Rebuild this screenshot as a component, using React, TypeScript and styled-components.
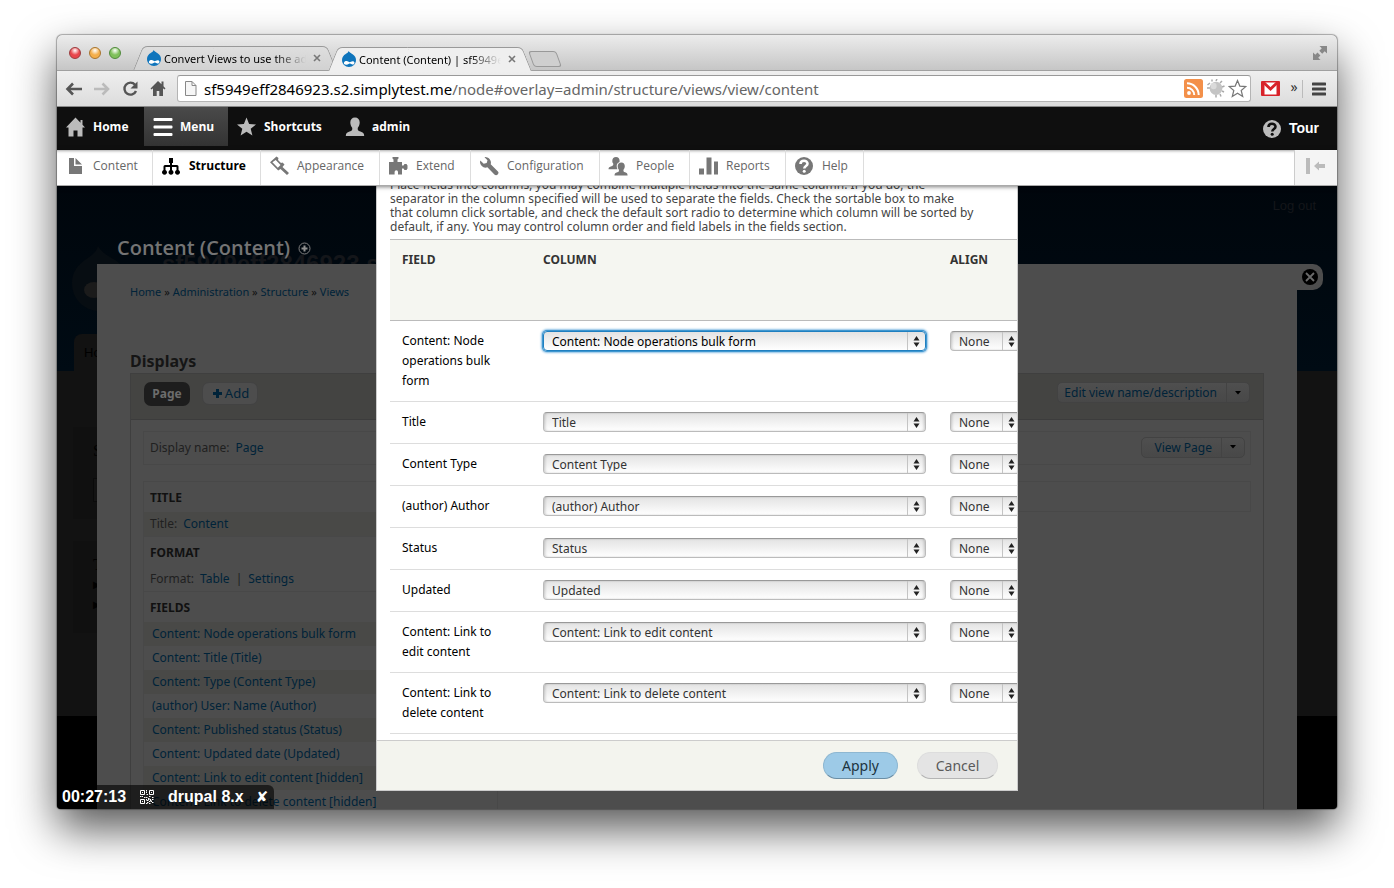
import React from "react";
import styled, { createGlobalStyle, css } from "styled-components";

const ui = `"Noto Sans", "Open Sans", sans-serif`;
const bar = `"Open Sans", "Noto Sans", sans-serif`;
const arial = `"Liberation Sans", Arial, sans-serif`;

const GlobalStyle = createGlobalStyle`
  *, *::before, *::after { box-sizing: border-box; }
  body { margin: 0; background: #fff; font-family: ${ui}; font-size: 12px; }
  button, select, input { font: inherit; color: inherit; margin: 0; }
  a { text-decoration: none; color: inherit; }
  h1, h2, h3, p, ul { margin: 0; padding: 0; font-size: inherit; }
  ul { list-style: none; }
`;

/* ---------- browser window ---------- */

const Desktop = styled.div`
  height: 100vh;
  padding: 35px 57px 79px;
  overflow: hidden;
`;

const BrowserWindow = styled.div`
  height: 100%;
  display: flex;
  flex-direction: column;
  border-radius: 5px 5px 4px 4px;
  overflow: hidden;
  background: #4d4d4d;
  box-shadow: 0 0 1px 1px rgba(0, 0, 0, 0.3), 0 20px 44px rgba(0, 0, 0, 0.66);
`;

const TitleBar = styled.div`
  flex: none;
  height: 36px;
  display: flex;
  align-items: flex-end;
  padding: 0 10px 0 12px;
  background: linear-gradient(#ececec, #c6c6c6);
  border-bottom: 1px solid #a0a0a0;
`;

const Lights = styled.div`
  display: flex;
  gap: 8px;
  align-self: center;
  width: 70px;
`;

const Light = styled.button<{ $tone: string; $rim: string }>`
  width: 12px;
  height: 12px;
  padding: 0;
  border-radius: 50%;
  border: 1px solid ${(p) => p.$rim};
  background: radial-gradient(circle at 50% 25%, #fff 0, ${(p) => p.$tone} 50%, ${(p) => p.$tone} 100%);
`;

const Tab = styled.div<{ $active?: boolean }>`
  position: relative;
  z-index: ${(p) => (p.$active ? 2 : 1)};
  width: 195px;
  height: 24px;
  margin-bottom: ${(p) => (p.$active ? "-1px" : "0")};
  display: flex;
  align-items: center;
  padding: 0 11px 0 7px;
  font-size: 11px;
  &::before, &::after {
    content: "";
    position: absolute;
    z-index: -1;
    top: 0;
    bottom: 0;
    border-top: 1px solid #999;
    background: ${(p) => (p.$active ? "#efefef" : "linear-gradient(#dedede, #d2d2d2)")};
  }
  &::before {
    left: -1px;
    right: 50%;
    border-left: 1px solid #999;
    border-radius: 5px 0 0 0;
    transform: skewX(-22deg);
  }
  &::after {
    left: 40%;
    right: 2px;
    border-right: 1px solid #999;
    border-radius: 0 5px 0 0;
    transform: skewX(22deg);
  }
`;

const TabLabel = styled.span`
  flex: 1;
  margin-left: 2px;
  white-space: nowrap;
  overflow: hidden;
  mask-image: linear-gradient(to right, #000 78%, transparent 100%);
`;

const TabClose = styled.button`
  width: 12px;
  height: 12px;
  margin-left: 5px;
  padding: 0;
  border: 0;
  background: none;
  line-height: 0;
`;

const NewTab = styled.button`
  width: 28px;
  height: 16px;
  margin: 0 0 3px 2px;
  border: 1px solid #999;
  border-radius: 3px;
  background: #cfcfcf;
  transform: skewX(20deg);
`;

const Grow = styled.div`
  flex: 1;
`;

const Fullscreen = styled.button`
  align-self: center;
  padding: 0;
  border: 0;
  background: none;
  line-height: 0;
`;

const NavBar = styled.div`
  flex: none;
  height: 36px;
  display: flex;
  align-items: center;
  padding: 0 11px 0 8px;
  background: linear-gradient(#efefef, #dcdcdc);
  border-bottom: 1px solid #8a8a8a;
`;

const NavButton = styled.button`
  width: 28px;
  height: 24px;
  padding: 0;
  border: 0;
  background: none;
  text-align: left;
  line-height: 0;
`;

const Omnibox = styled.label`
  flex: 1;
  min-width: 0;
  height: 27px;
  display: flex;
  align-items: center;
  gap: 3px;
  padding: 0 3px 0 6px;
  background: #fff;
  border: 1px solid #b4b4b4;
  border-top-color: #999;
  border-radius: 3px;
`;

const Url = styled.div`
  flex: 1;
  margin-left: 3px;
  font-size: 15px;
  line-height: 20px;
  white-space: nowrap;
  overflow: hidden;
  color: #666;
  strong { font-weight: 400; color: #000; }
`;

const Extensions = styled.div`
  display: flex;
  align-items: center;
  margin-left: 10px;
  font-size: 14px;
  color: #333;
`;

const More = styled.button`
  width: 23px;
  height: 18px;
  margin-right: 9px;
  padding: 0 0 3px 6px;
  border: 0;
  border-right: 1px solid #bbb;
  background: none;
  line-height: 14px;
`;

/* ---------- admin toolbar ---------- */

const AdminBar = styled.nav`
  flex: none;
  height: 43px;
  display: flex;
  align-items: flex-start;
  background: #0f0f0f;
  color: #fff;
  font: bold 12px/39px ${bar};
`;

const AdminItem = styled.a<{ $width: number; $on?: boolean }>`
  width: ${(p) => p.$width}px;
  height: 39px;
  display: flex;
  align-items: center;
  gap: 7px;
  padding-left: 9px;
  ${(p) => p.$on && css`background: linear-gradient(#4a4a4a, #333);`}
`;

const TourItem = styled.a`
  display: flex;
  align-items: center;
  gap: 7px;
  padding: 1px 18px 0 0;
  margin-left: auto;
  font: bold 14px/41px ${arial};
`;

const Tray = styled.nav`
  position: relative;
  z-index: 3;
  flex: none;
  height: 36px;
  display: flex;
  background: #fff;
  border-bottom: 1px solid #aaa;
  box-shadow: 0 1px 4px rgba(0, 0, 0, 0.5), inset 0 3px 3px -2px rgba(0, 0, 0, 0.35);
  color: #666;
  font: 12px/32px ${bar};
`;

const TrayItem = styled.a<{ $width: number; $on?: boolean }>`
  width: ${(p) => p.$width}px;
  display: flex;
  align-items: center;
  gap: 8px;
  padding: 0 0 4px 8px;
  border-right: 1px solid #ddd;
  ${(p) => p.$on && css`color: #000; font-weight: 700;`}
`;

const TrayToggle = styled.button`
  width: 43px;
  margin-left: auto;
  padding: 0 0 3px;
  border: 0;
  border-left: 1px solid #ccc;
  background: #f4f4f4;
  line-height: 0;
`;

/* ---------- dimmed site page ---------- */

const Viewport = styled.div`
  position: relative;
  flex: 1;
  min-height: 0;
  overflow: hidden;
  background: #000;
`;

const SiteHeader = styled.header`
  height: 185px;
  display: flex;
  flex-direction: column;
  background: linear-gradient(#00060c, #000b14);
  color: #14161a;
  font: 13px/20px ${arial};
`;

const LogOut = styled.a`
  align-self: flex-end;
  margin: 10px 21px 0 0;
`;

const Brand = styled.div`
  display: flex;
  align-items: flex-start;
  gap: 32px;
  margin: 30px 0 0 15px;
  height: 70px;
  font: bold 24px/36px ${arial};
`;

const SiteTab = styled.a`
  width: 80px;
  height: 37px;
  margin: auto 0 0 17px;
  padding-left: 10px;
  border-radius: 8px 8px 0 0;
  background: #121212;
  color: #000;
  line-height: 38px;
`;

const SiteMain = styled.main`
  height: 345px;
  padding: 56px 0 0 16px;
  background: #121212;
`;

const SideBlock = styled.section`
  width: 240px;
  height: 92px;
  margin-bottom: 22px;
  padding: 14px 0 0 20px;
  background: #101010;
  color: #000;
  font: 16px/20px "Liberation Serif", serif;
`;

const SideInput = styled.div`
  width: 150px;
  height: 24px;
  margin-top: 17px;
  border: 1px solid #0a0a0a;
  background: #131313;
`;

const SideLink = styled.div`
  font-size: 10px;
`;

/* ---------- overlay with the view editor ---------- */

const Overlay = styled.div`
  position: absolute;
  inset: 0 40px 0 40px;
  display: flex;
  flex-direction: column;
`;

const OverlayTitle = styled.div`
  flex: none;
  height: 78px;
  display: flex;
  align-items: center;
  gap: 8px;
  padding: 46px 0 0 20px;
  color: #747474;
  h1 { font: 600 20px/30px ${bar}; }
`;

const OverlayBody = styled.div`
  position: relative;
  flex: 1;
  min-height: 0;
  padding: 18px 33px 0;
  background: #4d4d4d;
  color: #202020;
`;

const OverlayClose = styled.button`
  position: absolute;
  left: 100%;
  top: 0;
  width: 26px;
  height: 26px;
  padding: 0 0 0 4px;
  border: 0;
  border-radius: 0 10px 10px 0;
  background: #4d4d4d;
  line-height: 0;
  text-align: left;
`;

const Breadcrumb = styled.nav`
  font-size: 11px;
  line-height: 20px;
  color: #111;
  a { color: #002339; }
`;

const DisplaysHeading = styled.h2`
  margin-top: 47px;
  font-size: 16px;
  line-height: 24px;
  color: #151515;
`;

const Displays = styled.section`
  height: 600px;
  border: 1px solid #3f3f3f;
`;

const DisplaysBar = styled.div`
  height: 46px;
  display: flex;
  align-items: flex-start;
  gap: 12px;
  padding: 8px 13px 0;
  background: #444442;
  border-bottom: 1px solid #3c3c3c;
`;

const PageButton = styled.button`
  width: 46px;
  height: 24px;
  padding: 0 0 2px;
  border: 0;
  border-radius: 7px;
  background: #1d1d1d;
  color: #6c6c6c;
  font-weight: 700;
`;

const AddButton = styled.button`
  width: 56px;
  height: 23px;
  display: flex;
  align-items: center;
  justify-content: center;
  gap: 3px;
  padding: 0 0 1px 2px;
  border: 1px solid #424242;
  border-radius: 7px;
  background: #4d4d4d;
  color: #002339;
  font-size: 13px;
`;

const SplitButton = styled.button<{ $inset?: number }>`
  height: 21px;
  display: flex;
  align-items: center;
  margin-left: auto;
  padding: 0 0 0 ${(p) => p.$inset ?? 6}px;
  border: 1px solid #424242;
  border-radius: 5px;
  background: linear-gradient(#4f4f4f, #484848);
  color: #002339;
  white-space: nowrap;
`;

const SplitCaret = styled.span`
  width: 23px;
  height: 19px;
  display: grid;
  place-items: center;
  margin-left: 9px;
  border-left: 1px solid #434343;
`;

const DisplayBody = styled.div`
  padding: 11px 12px 0;
`;

const DisplayName = styled.div`
  height: 34px;
  display: flex;
  align-items: center;
  gap: 6px;
  padding: 0 5px 2px 6px;
  border: 1px solid #484848;
  a { color: #002339; }
`;

const Columns = styled.div`
  display: grid;
  grid-template-columns: 355fr 361fr 361fr;
  gap: 16px;
  align-items: start;
  margin-top: 16px;
`;

const Column = styled.div`
  min-height: 31px;
  border: 1px solid #484848;
`;

const BucketTitle = styled.h3`
  height: 30px;
  padding: 0 6px;
  line-height: 32px;
  color: #111;
`;

const Bucket = styled.div`
  border-bottom: 1px solid #484848;
`;

const Setting = styled.div<{ $shaded?: boolean; $indent?: boolean }>`
  height: 24px;
  display: flex;
  gap: 6px;
  padding-left: ${(p) => (p.$indent ? 8 : 6)}px;
  line-height: 24px;
  white-space: nowrap;
  ${(p) => p.$shaded && css`background: #494947;`}
  a { color: #002339; }
`;

/* ---------- settings dialog ---------- */

const Dialog = styled.section`
  position: absolute;
  top: 0;
  bottom: 18px;
  left: 0;
  right: 0;
  max-width: 642px;
  margin: 0 auto;
  display: flex;
  flex-direction: column;
  background: #fff;
  border: 1px solid #ccc;
  border-top: 0;
`;

const DialogBody = styled.div`
  flex: 1;
  min-height: 0;
  display: flex;
  flex-direction: column;
  justify-content: flex-end;
  padding: 0 0 6px 13px;
  overflow: hidden;
`;

const Description = styled.p`
  flex: none;
  margin-bottom: 5px;
  color: #444;
  font-size: 12px;
  line-height: 14px;
  span { display: block; white-space: nowrap; }
`;

const FieldTable = styled.table`
  flex: none;
  width: 748px;
  table-layout: fixed;
  border-collapse: separate;
  border-spacing: 0;
  line-height: 20px;
  th {
    height: 82px;
    padding: 10px 12px;
    text-align: left;
    vertical-align: top;
    text-transform: uppercase;
    background: #f5f6f1;
    border-top: 1px solid #bbb;
    border-bottom: 1px solid #bbb;
    color: #333;
  }
  td {
    padding: 10px 12px;
    vertical-align: top;
    border-bottom: 1px solid #ddd;
    color: #000;
  }
  td:first-child { padding-right: 20px; }
`;

const Picker = styled.div<{ $width: number }>`
  position: relative;
  width: ${(p) => p.$width}px;
  height: 20px;
  margin-bottom: 1px;
  svg { position: absolute; right: 6px; top: 5px; pointer-events: none; }
  &::after {
    content: "";
    position: absolute;
    right: 18px;
    top: 1px;
    bottom: 1px;
    border-left: 1px solid #c4c4c4;
  }
`;

const Select = styled.select<{ $focus?: boolean }>`
  appearance: none;
  display: block;
  width: 100%;
  height: 20px;
  padding: 0 20px 2px 8px;
  border: 1px solid #bbb;
  border-top-color: #999;
  border-radius: 4px;
  outline: none;
  background: linear-gradient(#e3e3e3, #fff);
  box-shadow: inset 2px 0 3px -1px rgba(0, 0, 0, 0.2), inset -2px 0 3px -1px rgba(0, 0, 0, 0.2);
  color: ${(p) => (p.$focus ? "#000" : "#333")};
  ${(p) => p.$focus && css`
    border-color: #1f7fc0;
    box-shadow: 0 0 0 1px #3f97d0, 0 0 2px 2px #8cc0e6;
  `}
`;

const DialogFooter = styled.footer`
  flex: none;
  height: 50px;
  display: flex;
  justify-content: flex-end;
  gap: 19px;
  padding: 11px 19px 0 0;
  background: #f3f4ee;
  border-top: 1px solid #ccc;
`;

const PillButton = styled.button<{ $primary?: boolean }>`
  width: ${(p) => (p.$primary ? 75 : 81)}px;
  height: 27px;
  padding: 0;
  border: 1px solid ${(p) => (p.$primary ? "#8eb7d1" : "#ddd")};
  border-bottom-color: ${(p) => (p.$primary ? "#6b8ea5" : "#b4b4b4")};
  border-radius: 14px;
  background: ${(p) => (p.$primary ? "#9dcae7" : "#e4e4e4")};
  color: ${(p) => (p.$primary ? "#1c3340" : "#5a5a5a")};
  font-size: 14px;
  line-height: 24px;
`;

const StatusChip = styled.div`
  position: absolute;
  z-index: 4;
  left: 0;
  bottom: 0;
  height: 24px;
  display: flex;
  align-items: center;
  padding: 0 6px 0 5px;
  border-radius: 0 6px 0 0;
  background: rgba(0, 0, 0, 0.6);
  color: #fff;
  font: bold 16px/24px ${arial};
  svg { margin: 0 14px; }
`;

const ChipClose = styled.button`
  margin-left: 12px;
  padding: 0;
  border: 0;
  background: none;
  color: #fff;
  font: bold 15px/24px "DejaVu Sans", sans-serif;
`;

/* ---------- drawings ---------- */

const Drop = ({ size = 16 }: { size?: number }) => (
  <svg width={size} height={size} viewBox="0 0 16 16" aria-hidden="true">
    <path d="M7.500 0C8.600 1.600 10 2.200 11.600 3.200 13.800 4.700 15 6.600 15 9c0 4-3.200 7-7 7s-7-3-7-7c0-2.800 1.600-4.700 3.700-6C6.200 2.100 7.300 1.500 7.500 0z" fill="#0f75bc" />
    <path d="M3 11.500c1-1.700 3-1.900 4.600-.7.8.6 1.600.4 2.300-.1 1.600-1.100 3.600-.5 3.600 1.100 0 1.500-1.500 2.200-2.800 1.500-1-.6-1.600-1-2.700-.5-1.400.7-2.400 1.400-3.700.8C3.100 13.100 2.500 12.400 3 11.500z" fill="#fff" />
  </svg>
);

const Cross = () => (
  <svg width="12" height="12" viewBox="0 0 12 12"><path d="M3 3l6 6M9 3l-6 6" stroke="#777" strokeWidth="1.600" /></svg>
);

const Arrow = ({ color, flip }: { color: string; flip?: boolean }) => (
  <svg width="18" height="24" viewBox="0 0 18 24">
    <path d={flip ? "M1 12h14M9.500 6.500l5.500 5.500-5.500 5.500" : "M17 12H3M8 6.500L2.500 12 8 17.500"} fill="none" stroke={color} strokeWidth="2.600" />
  </svg>
);

const UpDown = () => (
  <svg width="7" height="11" viewBox="0 0 7 11"><path d="M3.500 0L6.500 4.500h-6zM3.500 11L.5 6.500h6z" fill="#222" /></svg>
);

const Caret = () => (
  <SplitCaret>
    <svg width="6" height="4" viewBox="0 0 6 4"><path d="M0 0h6L3 3.500z" fill="#000" /></svg>
  </SplitCaret>
);

const Glyph = ({ d, color = "#777", rule }: { d: string; color?: string; rule?: boolean }) => (
  <svg width="20" height="20" viewBox="0 0 20 20" aria-hidden="true">
    <path d={d} fill={color} fillRule={rule ? "evenodd" : "nonzero"} />
  </svg>
);

const shapes = {
  home: "M9.500 .5L0 10.500H2.500V19.500h5v-6h4v6h5v-9H19L16.500 7.800V3h-2v2.700z",
  menu: "M1.500 1h17a1 1 0 0 1 1 1v1a1 1 0 0 1-1 1h-17a1 1 0 0 1-1-1V2a1 1 0 0 1 1-1zM1.500 8.500h17a1 1 0 0 1 1 1v1a1 1 0 0 1-1 1h-17a1 1 0 0 1-1-1v-1a1 1 0 0 1 1-1zM1.500 16h17a1 1 0 0 1 1 1v1a1 1 0 0 1-1 1h-17a1 1 0 0 1-1-1v-1a1 1 0 0 1 1-1z",
  star: "M9.500 .5l2.600 6.400 6.900.5-5.300 4.400 1.700 6.700L9.500 14.800l-5.900 3.700 1.700-6.700L0 7.400l6.900-.5z",
  user: "M10 .5c3 0 4.700 2 4.700 5 0 2.300-.9 4-1.900 5.200-.4 2.300.3 3.200 2.600 3.900 2.600.8 3.800 1.600 3.800 4.400H.8c0-2.800 1.200-3.600 3.800-4.400 2.300-.7 3-1.600 2.600-3.900-1-1.200-1.900-2.900-1.900-5.200 0-3 1.700-5 4.700-5z",
  file: "M4 2h5v8h8v8H4zM10.500 2L17 8.500h-6.500z",
  tree: "M8 2h4v5H11v2h5a1.500 1.500 0 0 1 1.500 1.500V14a2.500 2.500 0 1 1-2 0v-3H11v3a2.500 2.500 0 1 1-2 0v-3H4.500v3a2.500 2.500 0 1 1-2 0v-3.500A1.500 1.500 0 0 1 4 9h5V7H8z",
  brush: "M7.500 0.500L9.500 2l-.5 2L12 7l1.500-.5 2 2-2 2.500 6.500 6-2 2-6.500-6-2.300 1.500L1 6.200zM3.400 6.200l5.400 5.600 2.700-2.900-4.800-5z",
  puzzle: "M4.500 1h6v1.500L9.500 3.500V6H14v3.500h1.500l1-1.500h2l1 1.500v3l-1 1.500h-2l-1-1.500H14V18.500h-4v-2.500a1.700 1.700 0 0 0-3.400 0v2.500H1V6h4.500V3.500L4.500 2.500z",
  wrench: "M5.500 1.200a5.500 5.500 0 0 1 6.200 7l7 7a2.300 2.300 0 0 1-3.300 3.300l-7-7.200a5.500 5.500 0 0 1-7.100-6.800l3.400 3.300 3-.8.8-2.800z",
  people: "M8 1c2.300 0 3.600 1.500 3.600 3.700 0 .4 0 .8-.1 1.200-1.800.7-2.800 2.200-2.800 4.200 0 1.200.3 2.200.8 3.200H.5c0-1.900 1-2.400 3-3 1.600-.5 2-1.100 1.700-2.700C4.600 6.800 4.300 6 4.300 4.700 4.300 2.500 5.700 1 8 1zM13.400 6.500c2.200 0 3.400 1.500 3.400 3.600 0 1.700-.6 2.800-1.300 3.600-.3 1.500.2 2.100 1.600 2.600 1.700.5 2.500 1.100 2.500 3.200H6.500c0-2.100.9-2.700 2.700-3.200 1.500-.5 2-1.100 1.700-2.600-.7-.8-1.200-1.900-1.200-3.600 0-2.100 1.400-3.600 3.700-3.600z",
  bars: "M1 12.500h5v6H1zM8.500 1.500h5V18.500h-5zM16 5.500h5V18.500h-5z",
};

const Question = ({ color, hole }: { color: string; hole: string }) => (
  <svg width="20" height="20" viewBox="0 0 20 20" aria-hidden="true">
    <circle cx="10" cy="10" r="9" fill={color} />
    <path d="M6.500 8c0-4.300 7-4.300 7-.3 0 2.300-3.200 2.300-3.200 4.800" fill="none" stroke={hole} strokeWidth="2.600" />
    <circle cx="10.200" cy="15.200" r="1.500" fill={hole} />
  </svg>
);

const Qr = () => (
  <svg width="14" height="14" viewBox="0 0 14 14" fill="none" stroke="#fff">
    <path d="M.5.500h4v4h-4zM9.500.500h4v4h-4zM.5 9.500h4v4h-4zM2 2.500h1M11 2.500h1M2 11.500h1" />
    <path d="M6.500 0v3M8 4.500H6M0 6.500h3M4 7.500h4M9 6.500h2M12 7.500h2M6.500 9v2M8 8.500h2M7 12.500h2M10 10.500h2M12 12.500h2M9 13.500h2M12 9.500h2M7 10.500h2M9 11.500h3M6 13.500h2M8 9.500h3" strokeDasharray="1.500 .5" />
  </svg>
);

/* ---------- data ---------- */

const tray: { label: string; width: number; icon: keyof typeof shapes; on?: boolean }[] = [
  { label: "Content", width: 96, icon: "file" },
  { label: "Structure", width: 108, icon: "tree", on: true },
  { label: "Appearance", width: 119, icon: "brush" },
  { label: "Extend", width: 91, icon: "puzzle" },
  { label: "Configuration", width: 129, icon: "wrench" },
  { label: "People", width: 90, icon: "people" },
  { label: "Reports", width: 96, icon: "bars" },
];

const rows = [
  ["Content: Node operations bulk form", "Content: Node operations bulk form"],
  ["Title", "Title"],
  ["Content Type", "Content Type"],
  ["(author) Author", "(author) Author"],
  ["Status", "Status"],
  ["Updated", "Updated"],
  ["Content: Link to edit content", "Content: Link to edit content"],
  ["Content: Link to delete content", "Content: Link to delete content"],
];

const fields = [
  "Content: Node operations bulk form",
  "Content: Title (Title)",
  "Content: Type (Content Type)",
  "(author) User: Name (Author)",
  "Content: Published status (Status)",
  "Content: Updated date (Updated)",
  "Content: Link to edit content [hidden]",
  "Content: Link to delete content [hidden]",
];

export default function App() {
  return (
    <Desktop>
      <GlobalStyle />
      <BrowserWindow>
        <TitleBar>
          <Lights>
            <Light aria-label="Close" $tone="#e8464c" $rim="#9c3a3c" />
            <Light aria-label="Minimize" $tone="#f4ae4a" $rim="#a8742c" />
            <Light aria-label="Zoom" $tone="#7fc05a" $rim="#4f8a3a" />
          </Lights>
          <Tab>
            <Drop />
            <TabLabel>Convert Views to use the admin</TabLabel>
            <TabClose aria-label="Close tab"><Cross /></TabClose>
          </Tab>
          <Tab $active>
            <Drop />
            <TabLabel>Content (Content) | sf5949eff</TabLabel>
            <TabClose aria-label="Close tab"><Cross /></TabClose>
          </Tab>
          <NewTab aria-label="New tab" />
          <Grow />
          <Fullscreen aria-label="Full screen">
            <svg width="14" height="14" viewBox="0 0 14 14" fill="#888"><path d="M6.500 0H14v7.500L11.700 5.200 9.200 7.700 6.300 4.800 8.800 2.300zM7.500 14H0V6.500l2.300 2.300 2.200-2.200 2.900 2.900-2.200 2.200z" /></svg>
          </Fullscreen>
        </TitleBar>

        <NavBar>
          <NavButton aria-label="Back"><Arrow color="#555" /></NavButton>
          <NavButton aria-label="Forward"><Arrow color="#bbb" flip /></NavButton>
          <NavButton aria-label="Reload">
            <svg width="18" height="24" viewBox="0 0 18 24"><path d="M14 7.700A6 6 0 1 0 15 14" fill="none" stroke="#555" strokeWidth="2.400" /><path d="M16.500 4.500v7h-7z" fill="#555" /></svg>
          </NavButton>
          <NavButton aria-label="Home page">
            <svg width="18" height="24" viewBox="0 0 18 24"><path d="M9 4L1.500 11.500l1.200 1L4 11.300V19h3.700v-5h2.600v5H14v-7.700l1.300 1.200 1.200-1L14.500 9.300V4.500h-2v2.800z" fill="#555" /></svg>
          </NavButton>
          <Omnibox>
            <svg width="14" height="17" viewBox="0 0 14 17"><path d="M1.500 1.500h6.500l4 4v10H1.500zM8 1.500v4h4" fill="#f6f6f6" stroke="#888" /></svg>
            <Url><strong>sf5949eff2846923.s2.simplytest.me</strong>/node#overlay=admin/structure/views/view/content</Url>
            <svg width="19" height="19" viewBox="0 0 19 19"><rect width="19" height="19" rx="2.500" fill="#f3904a" /><circle cx="5" cy="14" r="1.900" fill="#fff" /><path d="M3 8.800a7.200 7.200 0 0 1 7.200 7.200M3 4.300A11.700 11.700 0 0 1 14.700 16" fill="none" stroke="#fff" strokeWidth="2" /></svg>
            <svg width="19" height="19" viewBox="0 0 19 19"><path d="M4 4L1.500 6M6 2.500L6 .5M10 2l1-2M14 4l2-2M16 8l2.500-1M16 12l2 1M14 15l1 2.500M10 16v2.500M4 9H1" stroke="#aaa" strokeWidth="1.500" /><ellipse cx="10" cy="9.300" rx="6.400" ry="6.600" fill="#c4c4c4" /><ellipse cx="7.600" cy="7" rx="3" ry="3.200" fill="#dadada" /></svg>
            <svg width="19" height="19" viewBox="0 0 19 19"><path d="M9.500 1.500l2.300 5.600 6 .5-4.600 3.900 1.500 6-5.200-3.300-5.200 3.300 1.500-6L1.200 7.600l6-.5z" fill="#fff" stroke="#777" strokeWidth="1.200" /></svg>
          </Omnibox>
          <Extensions>
            <svg width="19" height="15" viewBox="0 0 19 15"><rect width="19" height="15" rx="1" fill="#d8232a" /><path d="M3.500 1.500h12V13.500h-12z" fill="#fff" /><path d="M2 1l7.500 7L17 1" fill="none" stroke="#d8232a" strokeWidth="2.800" /></svg>
            <More aria-label="More extensions">»</More>
            <svg width="14" height="14" viewBox="0 0 14 14"><path d="M1 2h12M1 7h12M1 12h12" stroke="#444" strokeWidth="3" strokeLinecap="round" /></svg>
          </Extensions>
        </NavBar>

        <AdminBar>
          <AdminItem href="#home" $width={87}><Glyph d={shapes.home} color="#bbb" />Home</AdminItem>
          <AdminItem href="#menu" $width={84} $on><Glyph d={shapes.menu} color="#fff" />Menu</AdminItem>
          <AdminItem href="#shortcuts" $width={108}><Glyph d={shapes.star} color="#bbb" />Shortcuts</AdminItem>
          <AdminItem href="#user" $width={84}><Glyph d={shapes.user} color="#bbb" />admin</AdminItem>
          <TourItem href="#tour"><Question color="#bbb" hole="#0f0f0f" />Tour</TourItem>
        </AdminBar>

        <Tray>
          {tray.map((t) => (
            <TrayItem key={t.label} href={`#${t.label}`} $width={t.width} $on={t.on}>
              <Glyph d={shapes[t.icon]} color={t.on ? "#000" : "#777"} rule />
              {t.label}
            </TrayItem>
          ))}
          <TrayItem href="#help" $width={78}><Question color="#777" hole="#fff" />Help</TrayItem>
          <TrayToggle aria-label="Vertical orientation">
            <svg width="20" height="16" viewBox="0 0 20 16" fill="#bbb"><path d="M0 0h4v16H0zM8 8l5-4.500V6h6v4h-6v2.500z" /></svg>
          </TrayToggle>
        </Tray>

        <Viewport>
          <SiteHeader>
            <LogOut href="#logout">Log out</LogOut>
            <Brand>
              <svg width="58" height="66" viewBox="0 0 58 66"><path d="M26 0c4 7 10 10 17 14 9 6 13 14 13 23 0 16-12 28-28 28S0 53 0 37c0-11 6-18 13-23C19 10 25 6 26 0z" fill="#070d12" /><ellipse cx="22" cy="44" rx="10" ry="8" fill="#1b1b1b" /></svg>
              sf5949eff2846923.s2.simplytest.me
            </Brand>
            <SiteTab href="#site-home">Home</SiteTab>
          </SiteHeader>
          <SiteMain>
            <SideBlock>Search<SideInput /></SideBlock>
            <SideBlock>Tools<SideLink>▶ Add content</SideLink><SideLink>▶ Tools</SideLink></SideBlock>
          </SiteMain>

          <Overlay>
            <OverlayTitle>
              <h1>Content (Content)</h1>
              <svg width="13" height="13" viewBox="0 0 13 13"><circle cx="6.500" cy="6.500" r="5.500" fill="none" stroke="#808080" /><path d="M6.500 3.500v6M3.500 6.500h6" stroke="#909090" strokeWidth="2" /></svg>
            </OverlayTitle>
            <OverlayBody>
              <OverlayClose aria-label="Close overlay">
                <svg width="18" height="18" viewBox="0 0 18 18"><circle cx="9" cy="9" r="8" fill="#000" /><path d="M5 5l8 8M13 5l-8 8" stroke="#6a6a6a" strokeWidth="1.800" /></svg>
              </OverlayClose>
              <Breadcrumb>
                <a href="#h">Home</a> » <a href="#a">Administration</a> » <a href="#s">Structure</a> » <a href="#v">Views</a>
              </Breadcrumb>
              <DisplaysHeading>Displays</DisplaysHeading>
              <Displays>
                <DisplaysBar>
                  <PageButton>Page</PageButton>
                  <AddButton>
                    <svg width="9" height="9" viewBox="0 0 9 9"><path d="M4.500 0v9M0 4.500h9" stroke="#002339" strokeWidth="3" /></svg>
                    Add
                  </AddButton>
                  <SplitButton>Edit view name/description<Caret /></SplitButton>
                </DisplaysBar>
                <DisplayBody>
                  <DisplayName>
                    Display name: <a href="#page">Page</a>
                    <SplitButton $inset={12}>View Page<Caret /></SplitButton>
                  </DisplayName>
                  <Columns>
                    <Column>
                      <Bucket>
                        <BucketTitle>TITLE</BucketTitle>
                        <Setting $shaded>Title: <a href="#title">Content</a></Setting>
                      </Bucket>
                      <Bucket>
                        <BucketTitle>FORMAT</BucketTitle>
                        <Setting>Format: <a href="#table">Table</a> | <a href="#settings">Settings</a></Setting>
                      </Bucket>
                      <Bucket>
                        <BucketTitle>FIELDS</BucketTitle>
                        {fields.map((f, i) => (
                          <Setting key={f} $indent $shaded={i % 2 === 0}><a href="#field">{f}</a></Setting>
                        ))}
                      </Bucket>
                    </Column>
                    <Column />
                    <Column />
                  </Columns>
                </DisplayBody>
              </Displays>
            </OverlayBody>
          </Overlay>

          <Dialog role="dialog" aria-label="Style options">
            <DialogBody>
              <Description>
                <span>Place fields into columns; you may combine multiple fields into the same column. If you do, the</span>
                <span>separator in the column specified will be used to separate the fields. Check the sortable box to make</span>
                <span>that column click sortable, and check the default sort radio to determine which column will be sorted by</span>
                <span>default, if any. You may control column order and field labels in the fields section.</span>
              </Description>
              <FieldTable>
                <colgroup><col width="141" /><col width="407" /><col width="200" /></colgroup>
                <thead>
                  <tr><th>Field</th><th>Column</th><th>Align</th></tr>
                </thead>
                <tbody>
                  {rows.map(([name, value], i) => (
                    <tr key={name}>
                      <td>{name}</td>
                      <td>
                        <Picker $width={383}>
                          <Select aria-label={`Column for ${name}`} $focus={i === 0}><option>{value}</option></Select>
                          <UpDown />
                        </Picker>
                      </td>
                      <td>
                        <Picker $width={71}>
                          <Select aria-label={`Align ${name}`}><option>None</option></Select>
                          <UpDown />
                        </Picker>
                      </td>
                    </tr>
                  ))}
                </tbody>
              </FieldTable>
            </DialogBody>
            <DialogFooter>
              <PillButton $primary>Apply</PillButton>
              <PillButton>Cancel</PillButton>
            </DialogFooter>
          </Dialog>

          <StatusChip>
            00:27:13
            <Qr />
            drupal 8.x
            <ChipClose aria-label="Dismiss">✘</ChipClose>
          </StatusChip>
        </Viewport>
      </BrowserWindow>
    </Desktop>
  );
}
